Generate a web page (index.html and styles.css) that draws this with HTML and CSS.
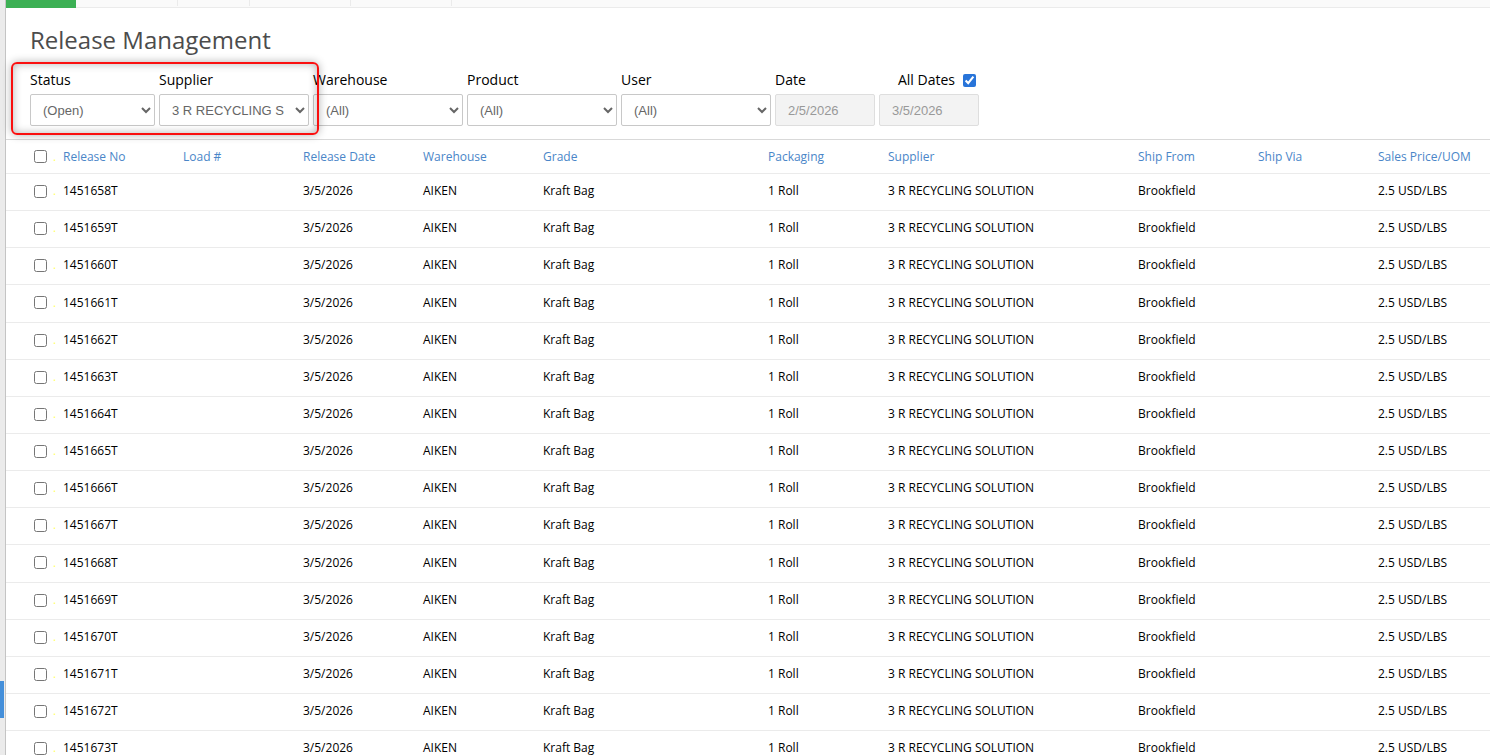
FILE: index.html
```html
<!DOCTYPE html>
<html lang="en">
<head>
    <meta charset="utf-8">
    <title>Release Management</title>
    <link rel="stylesheet" href="styles.css">
</head>
<body>
    <div class="page">
        <div class="rail"><div class="rail-active"></div></div>
        <main class="main">
            <div class="tabs">
                <div class="tab active"></div>
                <div class="tab large"></div>
                <div class="tab small"></div>
                <div class="tab"></div>
                <div class="tab"></div>
            </div>
            <h1>Release Management</h1>
            <form class="filters">
                <div class="field status">
                    <label for="status">Status</label>
                    <select id="status"><option>(Open)</option></select>
                </div>
                <div class="field">
                    <label for="supplier">Supplier</label>
                    <select id="supplier"><option>3 R RECYCLING SOLUTION</option></select>
                </div>
                <div class="field">
                    <label for="warehouse">Warehouse</label>
                    <select id="warehouse"><option>(All)</option></select>
                </div>
                <div class="field">
                    <label for="product">Product</label>
                    <select id="product"><option>(All)</option></select>
                </div>
                <div class="field">
                    <label for="user">User</label>
                    <select id="user"><option>(All)</option></select>
                </div>
                <div class="field date">
                    <label for="dateFrom">Date</label>
                    <input type="text" id="dateFrom" value="2/5/2026" disabled>
                </div>
                <div class="field date">
                    <label class="all-dates">All Dates <input type="checkbox" checked></label>
                    <input type="text" id="dateTo" aria-label="Date to" value="3/5/2026" disabled>
                </div>
                <div class="highlight"></div>
            </form>
            <table>
                <colgroup>
                    <col class="col-check">
                    <col class="col"><col class="col"><col class="col"><col class="col">
                    <col class="col-grade">
                    <col class="col">
                    <col class="col-supplier">
                    <col class="col"><col class="col">
                    <col>
                </colgroup>
                <thead>
                    <tr>
                        <th><label class="check"><input type="checkbox" aria-label="Select all"><span>.</span></label></th>
                        <th><a href="#">Release No</a></th>
                        <th><a href="#">Load #</a></th>
                        <th><a href="#">Release Date</a></th>
                        <th><a href="#">Warehouse</a></th>
                        <th><a href="#">Grade</a></th>
                        <th><a href="#">Packaging</a></th>
                        <th><a href="#">Supplier</a></th>
                        <th><a href="#">Ship From</a></th>
                        <th><a href="#">Ship Via</a></th>
                        <th><a href="#">Sales Price/UOM</a></th>
                    </tr>
                </thead>
                <tbody id="releases"></tbody>
            </table>
        </main>
    </div>
    <script>
        const releases = document.getElementById('releases');
        let rows = '';

        for (let no = 1451658; no <= 1451673; no++) {
            rows += `<tr>
                <td><label class="check"><input type="checkbox" aria-label="Select ${no}T"><span>.</span></label></td>
                <td>${no}T</td>
                <td></td>
                <td>3/5/2026</td>
                <td>AIKEN</td>
                <td>Kraft Bag</td>
                <td>1 Roll</td>
                <td>3 R RECYCLING SOLUTION</td>
                <td>Brookfield</td>
                <td></td>
                <td>2.5 USD/LBS</td>
            </tr>`;
        }

        releases.innerHTML = rows;
    </script>
</body>
</html>
```
FILE: styles.css
```css
* {
    box-sizing: border-box;
}
body {
    margin: 0;
    font-family: "Open Sans", sans-serif;
    font-size: 14px;
    color: #000;
    background: #fff;
}
.page {
    display: flex;
    height: 100vh;
    overflow: hidden;
}
.rail {
    position: relative;
    flex: none;
    width: 5px;
    background: #ebebeb;
}
.rail-active {
    position: absolute;
    top: 681px;
    left: 0;
    width: 4px;
    height: 37px;
    background: #448fda;
}
.main {
    flex: 1;
    min-width: 0;
    border-left: 1px solid #c4c4c4;
}

/* bottom edge of the tab strip */
.tabs {
    display: flex;
    height: 8px;
    background: #fafafa;
    border-bottom: 1px solid #ebebeb;
}
.tab {
    width: 101px;
    height: 6px;
    border-right: 1px solid #ebebeb;
}
.tab.small {
    width: 72px;
}
.tab.large {
    width: 102px;
}
.tab.active {
    width: 70px;
    height: 8px;
    border: 0;
    background: #3cb054;
}
h1 {
    margin: 16px 24px 0;
    font-size: 24px;
    font-weight: 400;
    line-height: 32px;
    color: #4c4c4c;
}

.filters {
    position: relative;
    display: flex;
    gap: 4px;
    padding: 14px 24px 13px;
}
.field {
    width: 150px;
}
.field.status {
    width: 125px;
}
.field.date {
    width: 100px;
}
.field label {
    display: block;
    height: 20px;
    margin-bottom: 4px;
    line-height: 20px;
}
.field select,
.field input[type="text"] {
    display: block;
    width: 100%;
    height: 32px;
    border: 1px solid #c8c8c8;
    border-radius: 2px;
    background: #fff;
    color: #666;
    font-family: "Liberation Sans", Arial, sans-serif;
    font-size: 13px;
}
.field select {
    padding: 0 8px;
}
.field input[type="text"] {
    padding: 0 12px;
}
.field input[type="text"]:disabled {
    border-color: #dedede;
    background: #f3f3f3;
    color: #999;
}
.field .all-dates {
    display: flex;
    align-items: center;
    justify-content: flex-end;
    gap: 8px;
    padding-right: 3px;
    white-space: nowrap;
}
.highlight {
    position: absolute;
    top: 6px;
    left: 5px;
    width: 308px;
    height: 73px;
    border: 2px solid #fa0f0f;
    border-radius: 6px;
    box-shadow: 0 0 8px rgba(0,0,0,0.3), inset 0 0 8px rgba(0,0,0,0.3);
    pointer-events: none;
}

input[type="checkbox"] {
    width: 13px;
    height: 13px;
    margin: 0;
    accent-color: #2874d9;
}
table {
    width: 100%;
    table-layout: fixed;
    border-collapse: separate;
    border-spacing: 0;
    border-top: 1px solid #d9d9d9;
    font-size: 12px;
}
.col-check {
    width: 57px;
}
.col {
    width: 120px;
}
.col-grade {
    width: 225px;
}
.col-supplier {
    width: 250px;
}
th,
td {
    height: 37px;
    padding: 0;
    border-bottom: 1px solid #ebebeb;
    font-weight: 400;
    line-height: 18px;
    text-align: left;
    white-space: nowrap;
}
th {
    height: 34px;
}
td {
    padding-bottom: 2px;
}
tbody tr:nth-child(7n+4) td {
    height: 38px;
}
.check {
    display: flex;
    align-items: center;
    gap: 6px;
    padding-left: 28px;
    color: #ffff66;
}
a {
    color: #4a86c8;
    text-decoration: none;
}
```
